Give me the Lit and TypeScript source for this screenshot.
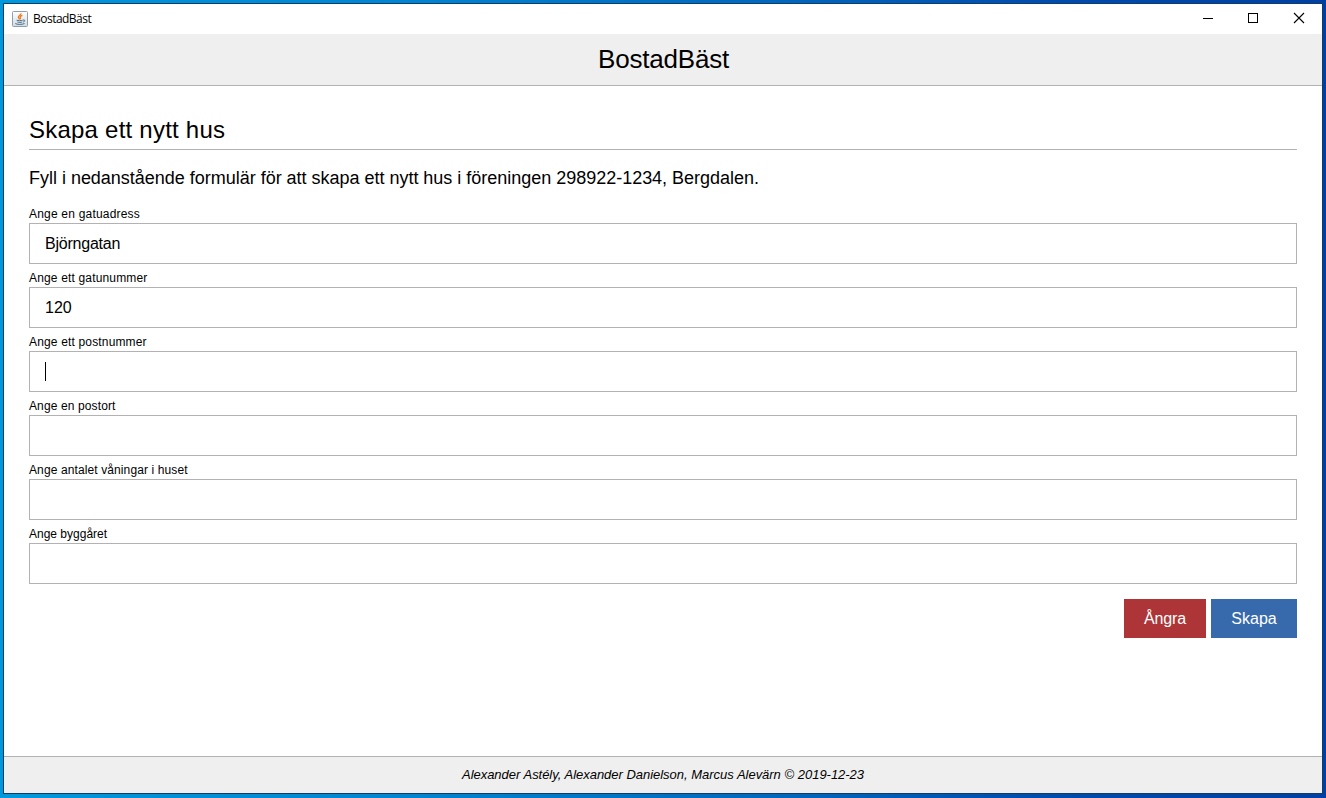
import { LitElement, html, css, svg } from "lit";
import { customElement, property } from "lit/decorators.js";

interface Field {
  label: string;
  value: string;
  kind: string;
  focused?: boolean;
}

const FIELDS: Field[] = [
  { label: "Ange en gatuadress", value: "Björngatan", kind: "street" },
  { label: "Ange ett gatunummer", value: "120", kind: "number" },
  { label: "Ange ett postnummer", value: "", kind: "zip", focused: true },
  { label: "Ange en postort", value: "", kind: "city" },
  { label: "Ange antalet våningar i huset", value: "", kind: "floors" },
  { label: "Ange byggåret", value: "", kind: "year" },
];

const javaIcon = svg`
  <defs>
    <linearGradient id="tile" x1="0" y1="0" x2="0" y2="1">
      <stop offset="0" stop-color="#ffffff" />
      <stop offset="1" stop-color="#d3dae0" />
    </linearGradient>
  </defs>
  <rect x="0.5" y="0.5" width="15" height="15" rx="1" fill="url(#tile)" stroke="#8b9fac" />
  <path d="M8.9 2.2c.7 1.5-2.5 2.2-2.5 3.9 0 1 .9 1.5 1.2 2.3M10.4 4.4C8.7 5 8 5.6 8.2 6.4c.2.6.6.9.1 1.9" fill="none" stroke="#ec7a1e" stroke-width="1.3" />
  <path d="M4.6 9.2c1.4.6 4.6.6 6.1 0M5.3 11c1.4.5 3.6.5 4.9 0M3.3 12.5c1.5 1.2 7.2 1.2 9.2 0M11 9.1c2.3-.8 2.3 1.5.2 1.9" fill="none" stroke="#44708f" stroke-width="1" />`;

@customElement("form-field")
class FormField extends LitElement {
  @property({ attribute: false }) field!: Field;

  static styles = css`
    :host {
      display: block;
      height: 64px;
      font-family: "Liberation Sans", Arial, sans-serif;
      color: #000;
    }
    .label {
      height: 18px;
      line-height: 18px;
      font-size: 12px;
      white-space: pre;
    }
    .street-label { letter-spacing: 0.2px; }
    .number-label, .zip-label { letter-spacing: 0.16px; }
    .city-label { letter-spacing: 0.12px; }
    .floors-label { letter-spacing: 0.11px; }
    .box {
      box-sizing: border-box;
      height: 41px;
      border: 1px solid #b2b2b2;
      padding: 0 15px;
      display: flex;
      align-items: center;
      font-size: 16px;
      line-height: 18px;
      background: #fff;
    }
    .street-value { letter-spacing: -0.22px; }
    .caret {
      width: 1px;
      height: 19px;
      background: #000;
    }
  `;

  render() {
    const f = this.field;
    return html`
      <div class="label ${f.kind}-label">${f.label}</div>
      <div class="box">
        ${f.focused ? html`<span class="caret"></span>` : html`<span class="${f.kind}-value">${f.value}</span>`}
      </div>
    `;
  }
}

@customElement("app-root")
class AppRoot extends LitElement {
  static styles = css`
    :host {
      display: block;
      box-sizing: border-box;
      width: 1326px;
      height: 798px;
      padding: 3px 3px 4px;
      overflow: hidden;
      background: linear-gradient(90deg, #0098dc 0%, #0085d2 30%, #0068bf 58%, #004bae 80%, #003fa3 100%);
      font-family: "Liberation Sans", Arial, sans-serif;
      color: #000;
    }
    .window {
      box-sizing: border-box;
      height: 791px;
      border: 1px solid #123c60;
      background: #fff;
      display: flex;
      flex-direction: column;
    }
    .titlebar {
      height: 30px;
      display: flex;
      align-items: center;
      flex: none;
    }
    .java { margin-left: 8px; margin-top: -1px; }
    .caption {
      margin-left: 5px;
      flex: 1;
      font-family: "Open Sans", "Noto Sans", sans-serif;
      font-size: 12px;
      line-height: 16px;
      letter-spacing: -0.52px;
    }
    .controls { display: block; }
    .header {
      box-sizing: border-box;
      flex: none;
      height: 52px;
      background: #efefef;
      border-bottom: 1px solid #b2b2b2;
      padding-left: 1px;
      text-align: center;
      font-size: 26px;
      line-height: 50px;
      letter-spacing: -0.2px;
    }
    .content {
      flex: 1;
      padding: 28px 25px 0;
    }
    .heading {
      height: 35px;
      border-bottom: 1px solid #b2b2b2;
      font-size: 24px;
      line-height: 31px;
      letter-spacing: 0.23px;
    }
    .intro {
      padding-top: 17px;
      height: 38px;
      font-size: 18px;
      line-height: 22px;
      letter-spacing: -0.016px;
      white-space: nowrap;
    }
    .actions {
      display: flex;
      justify-content: flex-end;
      gap: 5px;
      margin-top: 10px;
    }
    .button {
      height: 39px;
      border: 0;
      padding: 0;
      color: #fff;
      font-family: inherit;
      font-size: 16px;
      line-height: 39px;
    }
    .cancel { width: 82px; background: #ad3537; letter-spacing: -0.15px; }
    .create { width: 86px; background: #376aad; }
    .footer {
      box-sizing: border-box;
      flex: none;
      height: 37px;
      border-top: 1px solid #b2b2b2;
      background: #efefef;
      text-align: center;
      font-size: 13px;
      font-style: italic;
      line-height: 35px;
      letter-spacing: -0.04px;
      word-spacing: 0.2px;
    }
  `;

  render() {
    return html`
      <div class="window">
        <div class="titlebar">
          <svg class="java" width="16" height="16" viewBox="0 0 16 16">${javaIcon}</svg>
          <span class="caption">BostadBäst</span>
          <svg class="controls" width="138" height="30" viewBox="0 0 138 30" fill="none" stroke="#000" shape-rendering="crispEdges">
            <path d="M19 14.5h10" />
            <rect x="64.5" y="9.5" width="9" height="9" />
            <path d="M110 9l10 10M120 9l-10 10" shape-rendering="auto" stroke-width="1.1" />
          </svg>
        </div>
        <div class="header">BostadBäst</div>
        <div class="content">
          <div class="heading">Skapa ett nytt hus</div>
          <div class="intro">Fyll i nedanstående formulär för att skapa ett nytt hus i föreningen 298922-1234, Bergdalen.</div>
          ${FIELDS.map((f) => html`<form-field .field=${f}></form-field>`)}
          <div class="actions">
            <button class="button cancel">Ångra</button>
            <button class="button create">Skapa</button>
          </div>
        </div>
        <div class="footer">Alexander Astély, Alexander Danielson, Marcus Alevärn © 2019-12-23</div>
      </div>
    `;
  }
}
